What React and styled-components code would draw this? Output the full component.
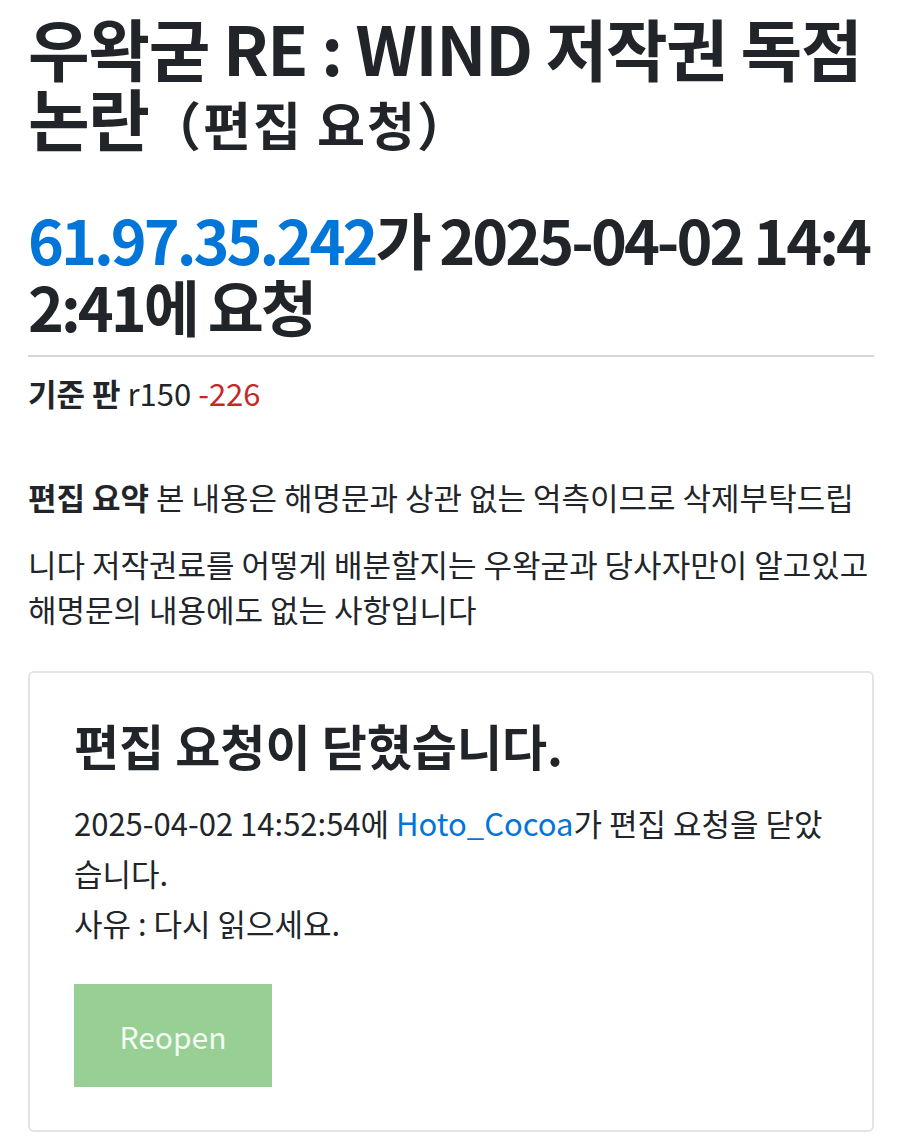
import React from "react";
import styled, { createGlobalStyle } from "styled-components";

const GlobalStyle = createGlobalStyle`
  html, body {
    margin: 0;
    padding: 0;
    background: #ffffff;
  }
  body {
    font-family: "Noto Sans CJK KR", "Noto Sans", sans-serif;
    color: #212529;
  }
`;

const Page = styled.div`
  padding: 12px 26px 14px 28px;
`;

const Title = styled.h1`
  margin: 0;
  font-size: 67px;
  font-weight: 700;
  line-height: 70px;
  letter-spacing: -1.3px;
`;

const Small = styled.small`
  font-size: 0.78em;
  font-weight: 700;
  letter-spacing: 2px;
`;

const SubTitle = styled.h2`
  margin: 47px 0 0;
  font-size: 61px;
  font-weight: 700;
  line-height: 67px;
  letter-spacing: -3px;
  word-break: break-all;
`;

const Link = styled.a`
  color: #0275d8;
  text-decoration: none;
`;

const Divider = styled.hr`
  margin: 16px 0 0;
  border: 0;
  border-top: 2px solid #d6d6d6;
`;

const Meta = styled.p`
  margin: 16px 0 0;
  font-size: 31px;
  line-height: 40px;
`;

const Label = styled.b`
  font-weight: 700;
`;

const Minus = styled.span`
  color: #c62828;
`;

const Summary = styled.div`
  margin-top: 61px;
  font-size: 31px;
  line-height: 45px;
`;

const SummaryLine = styled.p`
  margin: ${(p) => (p.$first ? "0 0 22px" : "0")};
`;

const Card = styled.section`
  margin-top: 40px;
  border: 2px solid #e4e4e4;
  border-radius: 6px;
  padding: 42px 44px 43px;
`;

const CardTitle = styled.h3`
  margin: 0;
  font-size: 49px;
  font-weight: 700;
  line-height: 60px;
`;

const CardText = styled.p`
  margin: 23px 0 0;
  font-size: 31px;
  line-height: 50px;
`;

const ReopenButton = styled.button`
  display: block;
  margin-top: 36px;
  width: 198px;
  height: 103px;
  border: 0;
  border-radius: 0;
  background: #97cf95;
  color: #f4fbf3;
  font-family: "Noto Sans CJK KR", "Noto Sans", sans-serif;
  font-size: 30px;
  cursor: pointer;
`;

export default function App() {
  return (
    <>
      <GlobalStyle />
      <Page>
        <Title>
          우왁굳 RE : WIND 저작권 독점 논란<Small>（편집 요청）</Small>
        </Title>
        <SubTitle>
          <Link href="#">61.97.35.242</Link>가 2025-04-02 14:42:41에 요청
        </SubTitle>
        <Divider />
        <Meta>
          <Label>기준 판</Label> r150 <Minus>-226</Minus>
        </Meta>
        <Summary>
          <SummaryLine $first>
            <Label>편집 요약</Label> 본 내용은 해명문과 상관 없는 억측이므로 삭제부탁드립
          </SummaryLine>
          <SummaryLine>
            니다 저작권료를 어떻게 배분할지는 우왁굳과 당사자만이 알고있고 해명문의 내용에도 없는 사항입니다
          </SummaryLine>
        </Summary>
        <Card>
          <CardTitle>편집 요청이 닫혔습니다.</CardTitle>
          <CardText>
            2025-04-02 14:52:54에 <Link href="#">Hoto_Cocoa</Link>가 편집 요청을 닫았습니다.
            <br />
            사유 : 다시 읽으세요.
          </CardText>
          <ReopenButton>Reopen</ReopenButton>
        </Card>
      </Page>
    </>
  );
}
